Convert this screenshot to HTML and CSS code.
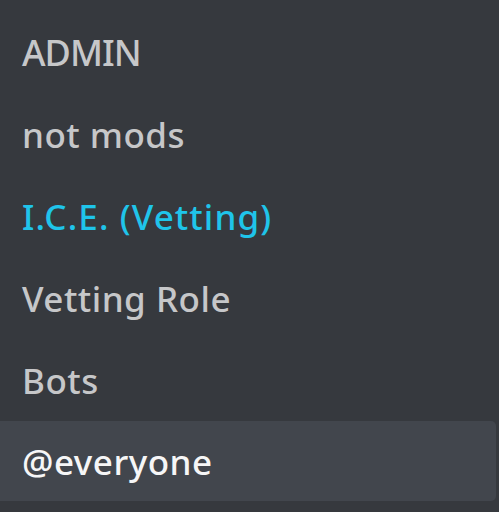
FILE: index.html
```html
<!DOCTYPE html>
<html>
<head>
<meta charset="utf-8">
<link rel="stylesheet" href="styles.css">
</head>
<body>
<ul class="roles">
  <li class="role role-caps">ADMIN</li>
  <li class="role">not mods</li>
  <li class="role role-ice">I.C.E. (Vetting)</li>
  <li class="role">Vetting Role</li>
  <li class="role">Bots</li>
  <li class="role role-selected">@everyone</li>
</ul>
</body>
</html>
```
FILE: styles.css
```css
html, body {
  margin: 0;
  padding: 0;
  background: #36393e;
  width: 499px;
  height: 512px;
  overflow: hidden;
}
.roles {
  list-style: none;
  margin: 0;
  padding: 11px 3px 0 0;
  display: flex;
  flex-direction: column;
}
.role {
  height: 82px;
  display: flex;
  align-items: center;
  padding-left: 22px;
  font-family: "Noto Sans", "Open Sans", sans-serif;
  font-size: 35px;
  font-weight: 500;
  letter-spacing: 0.5px;
  color: #c6c7c9;
  border-radius: 0 5px 5px 0;
}
.role-caps {
  font-size: 36px;
  letter-spacing: -1px;
}
.role-ice {
  color: #1fc4ea;
  letter-spacing: 1.1px;
}
.role-selected {
  background: #42464d;
  color: #f6f6f7;
  height: 80px;
}
```
